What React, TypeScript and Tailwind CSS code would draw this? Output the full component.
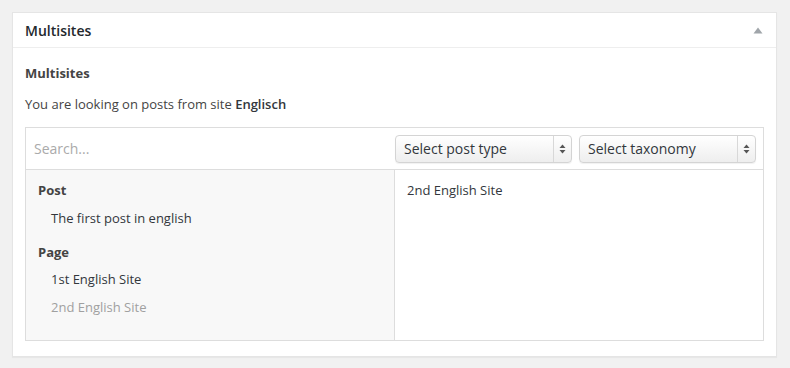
import React from 'react';

const font = { fontFamily: '"Open Sans", "Noto Sans", sans-serif' };

function SelectBox({ label }: { label: string }) {
	return (
		<div className="flex h-[28px] w-[177px] items-stretch rounded-[4px] border border-[#d4d4d4] bg-gradient-to-b from-[#ffffff] to-[#eeeeee] shadow-[inset_0_1px_0_#fff,0_1px_1px_rgba(0,0,0,0.06)]">
			<div className="flex flex-1 items-center pl-[8px] text-[14px] text-[#32373c]">{label}</div>
			<div className="flex w-[18px] items-center justify-center border-l border-[#d8d8d8]">
				<svg width="7" height="10" viewBox="0 0 7 10">
					<path d="M3.5 0.5 L6.5 4 L0.5 4 Z" fill="#555" />
					<path d="M3.5 9.5 L6.5 6 L0.5 6 Z" fill="#555" />
				</svg>
			</div>
		</div>
	);
}

export default function App() {
	return (
		<div className="min-h-[368px] bg-[#f1f1f1] px-[12px] pt-[12px] pb-[10px]" style={font}>
			<div className="w-[765px] border border-[#e5e5e5] bg-white shadow-[0_1px_1px_rgba(0,0,0,0.04)]">
				{/* Header */}
				<div className="flex h-[35px] items-center justify-between border-b border-[#eeeeee] pl-[12px] pr-[13px]">
					<h2 className="text-[14px] font-semibold text-[#23282d]">Multisites</h2>
					<svg width="10" height="7" viewBox="0 0 10 7">
						<path d="M5 0.5 L9.5 6.5 L0.5 6.5 Z" fill="#a0a5aa" />
					</svg>
				</div>

				{/* Body */}
				<div className="px-[12px] pt-[16px] pb-[15px]">
					<h3 className="text-[13px] leading-[18px] font-bold text-[#444]">Multisites</h3>
					<p className="mt-[13px] text-[13px] leading-[18px] text-[#444]">
						You are looking on posts from site <strong className="font-semibold text-[#32373c]">Englisch</strong>
					</p>

					<div className="mt-[14px] w-[739px] border border-[#dddddd]">
						{/* Search + filters */}
						<div className="flex h-[42px] items-center border-b border-[#dddddd] pr-[7px]">
							<div className="flex-1 pl-[8px] text-[14px] text-[#aaaaaa]">Search...</div>
							<div className="flex gap-[7px]">
								<SelectBox label="Select post type" />
								<SelectBox label="Select taxonomy" />
							</div>
						</div>

						{/* Columns */}
						<div className="flex h-[170px]">
							<div className="w-[369px] border-r border-[#dddddd] bg-[#f8f8f8] pl-[12px] pt-[10px] text-[13px] text-[#32373c]">
								<div className="font-bold leading-[20px] text-[#444]">Post</div>
								<div className="mt-[8px] pl-[13px] leading-[20px]">The first post in english</div>
								<div className="mt-[14px] font-bold leading-[20px] text-[#444]">Page</div>
								<div className="mt-[7px] pl-[13px] leading-[20px]">1st English Site</div>
								<div className="mt-[8px] pl-[13px] leading-[20px] text-[#a0a0a0]">2nd English Site</div>
							</div>
							<div className="flex-1 pl-[12px] pt-[10px] text-[13px] leading-[20px] text-[#32373c]">
								2nd English Site
							</div>
						</div>
					</div>
				</div>
			</div>
		</div>
	);
}
